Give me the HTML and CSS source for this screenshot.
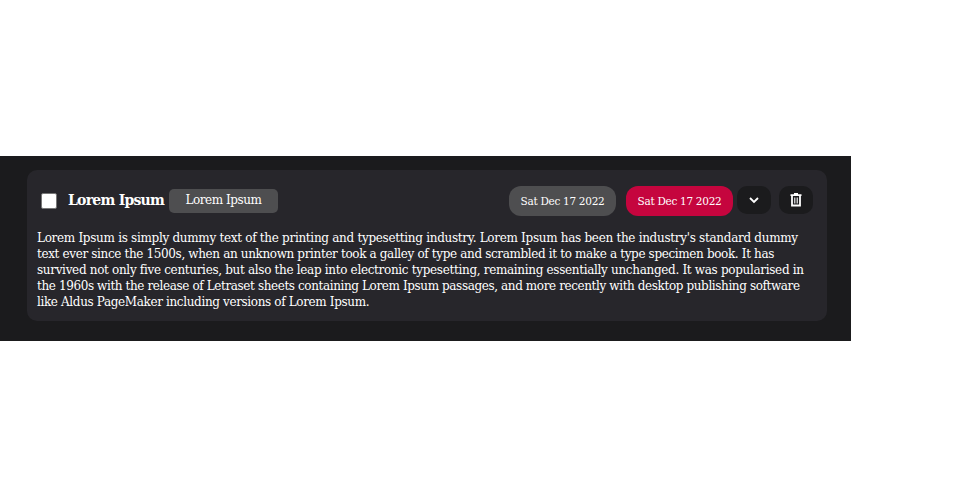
FILE: index.html
```
<!DOCTYPE html>
<html lang="en">
<head>
<meta charset="utf-8">
<title>Tasks</title>
<link rel="stylesheet" href="styles.css">
</head>
<body>
<main class="panel">
  <article class="card">
    <header class="card-header">
      <input class="check" type="checkbox" aria-label="Done">
      <h2 class="title">Lorem Ipsum</h2>
      <span class="tag">Lorem Ipsum</span>
      <span class="date">Sat Dec 17 2022</span>
      <span class="date due">Sat Dec 17 2022</span>
      <button class="icon-btn" aria-label="Expand">
        <svg width="16" height="16" viewBox="0 0 16 16"><path d="M4 6l4 4 4-4" fill="none" stroke="#fff" stroke-width="1.8"/></svg>
      </button>
      <button class="icon-btn delete" aria-label="Delete">
        <svg width="16" height="16" viewBox="0 0 16 16"><path d="M2.5 3.2h11M6 2h4" fill="none" stroke="#fff" stroke-width="1.8"/><path d="M4 3.5v10h8v-10" fill="none" stroke="#fff" stroke-width="1.8"/><path d="M6.8 5.5v6M9.2 5.5v6" stroke="#fff" stroke-width="1.1"/></svg>
      </button>
    </header>
    <p class="text"><span class="line loose">Lorem Ipsum is simply dummy text of the printing and typesetting industry. Lorem Ipsum has been the industry's standard dummy</span> <span class="line">text ever since the 1500s, when an unknown printer took a galley of type and scrambled it to make a type specimen book. It has</span> <span class="line medium">survived not only five centuries, but also the leap into electronic typesetting, remaining essentially unchanged. It was popularised in</span> <span class="line tight">the 1960s with the release of Letraset sheets containing Lorem Ipsum passages, and more recently with desktop publishing software</span> <span class="line">like Aldus PageMaker including versions of Lorem Ipsum.</span></p>
  </article>
</main>
</body>
</html>
```
FILE: styles.css
```
* { box-sizing: border-box; }
body {
  margin: 0;
  background: #fff;
  color: #fff;
  font-family: "DejaVu Serif", serif;
}
.panel {
  width: 851px;
  height: 185px;
  margin-top: 156px;
  padding: 14px 24px 20px 27px;
  background: #1b1b1d;
}
.card {
  width: 800px;
  height: 151px;
  padding: 16px 14px 0 10px;
  border-radius: 10px;
  background: #27262b;
}
.card-header {
  display: flex;
  align-items: flex-start;
  height: 44px;
}
.check {
  appearance: none;
  width: 16px;
  height: 16px;
  margin: 7px 11px 0 4px;
  border: 1px solid #767676;
  border-radius: 2px;
  background: #fff;
}
.title {
  width: 97px;
  margin: 4px 4px 0 0;
  font-size: 14px;
  line-height: 20px;
  letter-spacing: -0.75px;
  white-space: nowrap;
}
.tag {
  width: 109px;
  height: 24px;
  margin: 3px 231px 0 0;
  border-radius: 5px;
  background: #4e4e50;
  font-size: 12px;
  line-height: 22px;
  text-align: center;
  letter-spacing: -0.45px;
}
.date {
  width: 107px;
  height: 30px;
  margin-right: 10px;
  border-radius: 12px;
  background: #4e4e50;
  font-size: 10.5px;
  line-height: 31px;
  text-align: center;
  letter-spacing: -0.3px;
  white-space: nowrap;
}
.due { margin-right: 4px; background: #c5053e; }
.icon-btn {
  display: flex;
  align-items: center;
  justify-content: center;
  width: 34px;
  height: 28px;
  padding: 0;
  border: 0;
  border-radius: 10px;
  background: #1b1b1d;
}
.delete { margin-left: 8px; }
.text {
  margin: 0;
  font-size: 12px;
  line-height: 16px;
  letter-spacing: -0.36px;
  white-space: nowrap;
}
.line { display: block; }
.loose { letter-spacing: -0.3px; }
.medium { letter-spacing: -0.32px; }
.tight { letter-spacing: -0.39px; }
```
